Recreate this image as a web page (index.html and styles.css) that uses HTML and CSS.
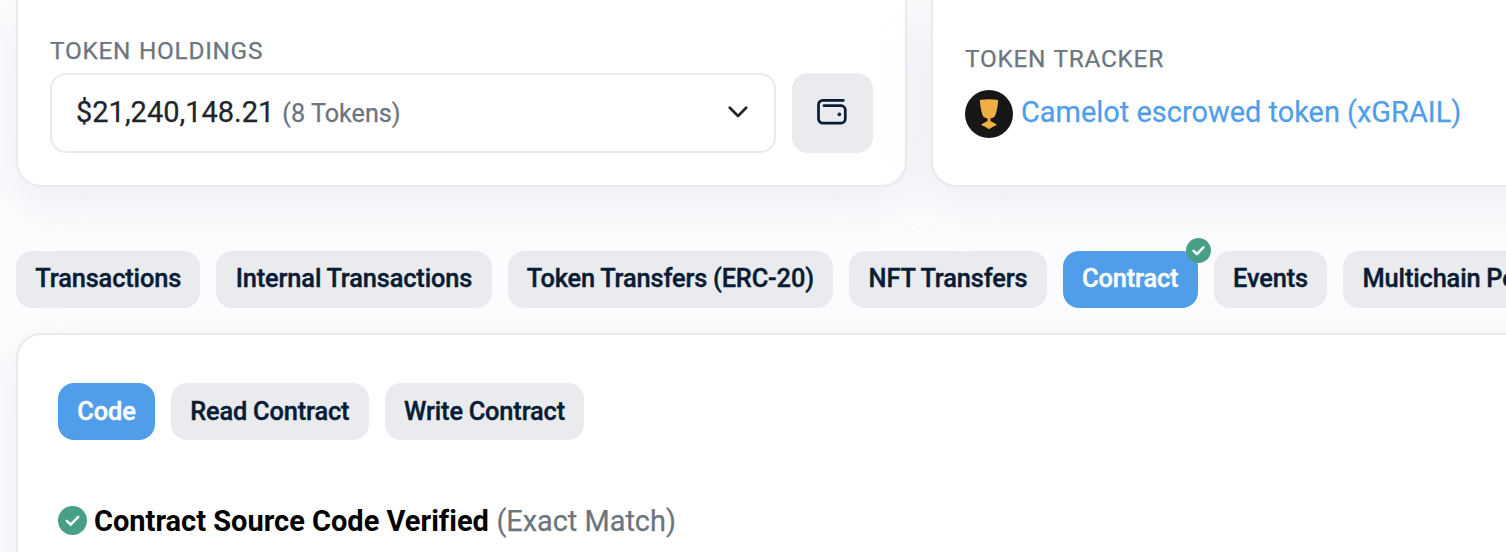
FILE: index.html
```html
<!DOCTYPE html>
<html lang="en">
<head>
<meta charset="utf-8">
<title>Contract</title>
<link rel="stylesheet" href="styles.css">
</head>
<body>
<main class="page">
  <div class="overview">
    <section class="card holdings">
      <h4 class="label">TOKEN HOLDINGS</h4>
      <div class="holdings-row">
        <button class="select">
          <span class="amount">$21,240,148.21</span>
          <span class="count">(8 Tokens)</span>
          <svg class="chevron" viewBox="0 0 20 12" width="20" height="12"><path d="M1.8 1.8 10 10l8.2-8.2" fill="none" stroke="#212529" stroke-width="2.7" stroke-linecap="round" stroke-linejoin="round"/></svg>
        </button>
        <button class="wallet" aria-label="Wallet">
          <svg viewBox="0 0 30 27" width="30" height="27"><path d="M26.3 2.4H6A4.3 4.3 0 0 0 1.5 6.7V20.8A4.3 4.3 0 0 0 6 25.1H24A4.2 4.2 0 0 0 28.3 20.8V11.9A4.2 4.2 0 0 0 24 7.7H7" fill="none" stroke="#081d35" stroke-width="2.7" stroke-linecap="round"/><circle cx="22.3" cy="16.4" r="1.8" fill="#081d35"/></svg>
        </button>
      </div>
    </section>
    <section class="card tracker">
      <h4 class="label">TOKEN TRACKER</h4>
      <div class="token">
        <svg viewBox="0 0 48 48" width="48" height="48"><circle cx="24" cy="24" r="24" fill="#171717"/><path d="M14.8 10Q24 8.4 33.2 10Q32.6 20 29.8 26.6Q28 28.3 25.5 28.5V31L31.8 34.5Q30.8 36 28.3 36.6L24 39.3 19.7 36.6Q17.2 36 16.2 34.5L22.5 31V28.5Q20 28.3 18.2 26.6Q15.4 20 14.8 10Z" fill="#f0af44"/></svg>
        <a class="token-link">Camelot escrowed token (xGRAIL)</a>
      </div>
    </section>
  </div>
  <nav class="pills tabs">
    <a class="pill">Transactions</a>
    <a class="pill">Internal Transactions</a>
    <a class="pill">Token Transfers (ERC-20)</a>
    <a class="pill">NFT Transfers</a>
    <a class="pill active">Contract
      <svg class="badge" viewBox="0 0 28 28" width="25" height="25"><circle cx="14" cy="14" r="14" fill="#479f87"/><path d="M8.5 14.4 12.2 18 19.5 10.4" fill="none" stroke="#fff" stroke-width="2.8" stroke-linecap="round" stroke-linejoin="round"/></svg>
    </a>
    <a class="pill">Events</a>
    <a class="pill">Multichain Portfolio</a>
  </nav>
  <section class="card contract">
    <nav class="pills">
      <a class="pill active">Code</a>
      <a class="pill">Read Contract</a>
      <a class="pill">Write Contract</a>
    </nav>
    <div class="verified">
      <svg viewBox="0 0 28 28" width="29" height="29"><circle cx="14" cy="14" r="14" fill="#479f87"/><path d="M8.5 14.4 12.2 18 19.5 10.4" fill="none" stroke="#fff" stroke-width="2.4" stroke-linecap="round" stroke-linejoin="round"/></svg>
      <span class="verified-title">Contract Source Code Verified</span>
      <span class="verified-note">(Exact Match)</span>
    </div>
  </section>
</main>
</body>
</html>
```
FILE: styles.css
```css
* { box-sizing: border-box; }
body {
  margin: 0;
  height: 552px;
  overflow: hidden;
  background: #fcfcfe;
  font-family: Roboto, "Liberation Sans", sans-serif;
  font-variant-ligatures: none;
  color: #212529;
  white-space: nowrap;
}
button { font: inherit; color: inherit; }
.page { padding-left: 16px; width: 1506px; height: 552px; overflow: hidden; }
.overview { display: flex; gap: 24px; height: 187px; }
.card {
  background: #fff;
  border: 2px solid #e9eaee;
  box-shadow: 0 16px 48px rgba(189, 197, 209, 0.24);
}
.holdings, .tracker { flex: none; border-top: 0; border-radius: 0 0 25px 25px; }
.holdings { width: 891px; padding: 36px 32px 32px; }
.tracker { width: 891px; padding: 44px 32px 32px; }
.label {
  margin: 0;
  font-size: 24.4px;
  line-height: 30px;
  font-weight: 400;
  letter-spacing: 0.7px;
  word-spacing: 1.2px;
  color: #6c757d;
  -webkit-text-stroke: 0.25px #6c757d;
}
.holdings-row { display: flex; gap: 16px; margin-top: 7px; }
.select {
  display: flex;
  align-items: center;
  width: 726px;
  height: 80px;
  padding: 0 26px 2px 24px;
  background: #fff;
  border: 2px solid #e9e9ef;
  border-radius: 16px;
}
.amount { font-size: 29px; -webkit-text-stroke: 0.25px #212529; }
.count { margin-left: 8px; padding-top: 3px; font-size: 25.2px; color: #6c757d; -webkit-text-stroke: 0.25px #6c757d; }
.chevron { margin-left: auto; }
.wallet {
  display: flex;
  align-items: center;
  justify-content: center;
  width: 81px;
  height: 80px;
  padding: 0 1px 4px 0;
  border: 0;
  border-radius: 16px;
  background: #eaebef;
}
.token { display: flex; align-items: center; gap: 8px; height: 48px; margin-top: 16px; }
.token-link { padding-bottom: 4px; font-size: 28.95px; color: #509ee9; -webkit-text-stroke: 0.25px #509ee9; }
.pills { display: flex; gap: 16px; }
.tabs { margin-top: 64px; }
.pill {
  position: relative;
  flex: none;
  height: 57px;
  padding: 0 19.3px;
  border-radius: 16px;
  background: #eaebef;
  color: #081d35;
  font-size: 25.4px;
  font-weight: 500;
  letter-spacing: -0.14px;
  word-spacing: -0.4px;
  line-height: 56px;
  -webkit-text-stroke: 0.4px currentColor;
}
.tabs .pill { line-height: 54px; }
.pill.active { background: #509ee9; color: #fff; }
.badge { position: absolute; top: -13px; right: -13px; }
.contract {
  width: 1600px;
  height: 400px;
  margin-top: 25px;
  padding: 48px 40px;
  border-radius: 25px;
}
.verified { display: flex; align-items: center; height: 40px; margin-top: 60px; }
.verified-title { margin-left: 7px; padding-top: 2px; font-size: 29px; font-weight: 700; color: #000; }
.verified-note { margin-left: 7.5px; padding-top: 2px; font-size: 28.9px; color: #6c757d; -webkit-text-stroke: 0.25px #6c757d; }
```
